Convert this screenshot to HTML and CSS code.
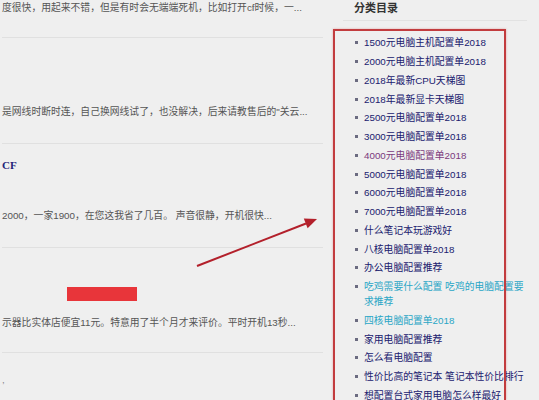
FILE: index.html
```html
<!DOCTYPE html>
<html lang="zh-CN">
<head>
<meta charset="utf-8">
<title>分类目录</title>
<link rel="stylesheet" href="styles.css">
</head>
<body>
<div class="page">
  <main class="posts">
    <article class="post post-first">
      <p class="excerpt">度很快，用起来不错，但是有时会无端端死机，比如打开cf时候，一...</p>
    </article>
    <article class="post post-second">
      <p class="excerpt">是网线时断时连，自己换网线试了，也没解决，后来请教售后的"关云...</p>
    </article>
    <article class="post post-third">
      <h3 class="post-title">CF</h3>
      <p class="excerpt excerpt-gap">2000，一家1900，在您这我省了几百。 声音很静，开机很快...</p>
    </article>
    <article class="post post-fourth">
      <div class="redact"></div>
      <p class="excerpt excerpt-gap2">示器比实体店便宜11元。特意用了半个月才来评价。平时开机13秒...</p>
    </article>
    <article class="post post-fifth">
      <span class="dot">,</span>
    </article>
  </main>
  <aside class="sidebar">
    <h2 class="widget-title">分类目录</h2>
    <ul class="cats">
      <li><a href="#">1500元电脑主机配置单2018</a></li>
      <li><a href="#">2000元电脑主机配置单2018</a></li>
      <li><a href="#">2018年最新CPU天梯图</a></li>
      <li><a href="#">2018年最新显卡天梯图</a></li>
      <li><a href="#">2500元电脑配置单2018</a></li>
      <li><a href="#">3000元电脑配置单2018</a></li>
      <li><a href="#" class="visited">4000元电脑配置单2018</a></li>
      <li><a href="#">5000元电脑配置单2018</a></li>
      <li><a href="#">6000元电脑配置单2018</a></li>
      <li><a href="#">7000元电脑配置单2018</a></li>
      <li><a href="#">什么笔记本玩游戏好</a></li>
      <li><a href="#">八核电脑配置单2018</a></li>
      <li><a href="#">办公电脑配置推荐</a></li>
      <li><a href="#" class="hover">吃鸡需要什么配置 吃鸡的电脑配置要求推荐</a></li>
      <li><a href="#" class="hover">四核电脑配置单2018</a></li>
      <li><a href="#">家用电脑配置推荐</a></li>
      <li><a href="#">怎么看电脑配置</a></li>
      <li><a href="#">性价比高的笔记本 笔记本性价比排行</a></li>
      <li><a href="#">想配置台式家用电脑怎么样最好</a></li>
    </ul>
  </aside>
</div>
<div class="highlight-box"></div>
<svg class="arrow" width="539" height="400" viewBox="0 0 539 400">
  <line x1="197" y1="266" x2="306" y2="223.5" stroke="#b3202b" stroke-width="2"/>
  <polygon points="317,219 307.6,228.3 303.8,218.6" fill="#b3202b"/>
</svg>
</body>
</html>
```
FILE: styles.css
```css
html, body {
  margin: 0;
  padding: 0;
  background: #efefef;
  width: 539px;
  height: 400px;
  overflow: hidden;
  font-family: "Liberation Sans", "Noto Sans CJK SC", sans-serif;
  font-size: 9.8px;
  color: #555;
}

.page {
  display: flex;
  height: 400px;
  overflow: hidden;
}

.posts {
  width: 321px;
  padding-left: 2px;
  flex: none;
}

.post {
  border-bottom: 1px solid #e0e0e0;
}

.post p, .post h3 {
  margin: 0;
}

.excerpt {
  line-height: 14px;
  white-space: nowrap;
}

.post-first {
  padding: 1px 0 22px;
}

.post-second {
  padding: 67px 0 24px;
}

.post-third {
  padding: 14px 0 24px;
}

.post-title {
  font-family: "Liberation Serif", "Noto Sans CJK SC", serif;
  font-size: 11px;
  font-weight: bold;
  line-height: 14px;
  color: #23237a;
}

.excerpt-gap {
  margin-top: 37px !important;
}

.post-fourth {
  padding: 39px 0 22px;
}

.redact {
  width: 70px;
  height: 14px;
  margin-left: 65px;
  background: #e8353a;
}

.excerpt-gap2 {
  margin-top: 15px !important;
}

.post-fifth {
  border-bottom: none;
  padding-top: 20px;
  line-height: 14px;
  color: #888;
}

.sidebar {
  margin-left: 20px;
  width: 184px;
  flex: none;
}

.widget-title {
  margin: 0;
  padding: 1px 0 5px 11px;
  font-size: 11px;
  line-height: 14px;
  font-weight: bold;
  color: #333;
  border-bottom: 1px solid #e2e2e2;
}

.cats {
  list-style: none;
  margin: 0;
  padding: 12.6px 0 0 12px;
}

.cats li {
  display: flex;
  gap: 6px;
  padding: 1.875px 0;
  line-height: 15px;
}

.cats li::before {
  content: "";
  flex: none;
  width: 3px;
  height: 3px;
  margin-top: 6px;
  background: #6b6b80;
}

.cats a {
  color: #20206e;
  text-decoration: none;
}

.cats a.visited {
  color: #7b3a7d;
}

.cats a.hover {
  color: #2aa6c6;
}

.highlight-box {
  position: absolute;
  left: 333px;
  top: 29px;
  width: 169px;
  height: 369px;
  border: 2px solid #c23c3e;
  border-bottom: none;
  box-shadow: 0 0 2px rgba(210, 80, 80, 0.45);
}

.arrow {
  position: absolute;
  left: 0;
  top: 0;
  pointer-events: none;
}
```
